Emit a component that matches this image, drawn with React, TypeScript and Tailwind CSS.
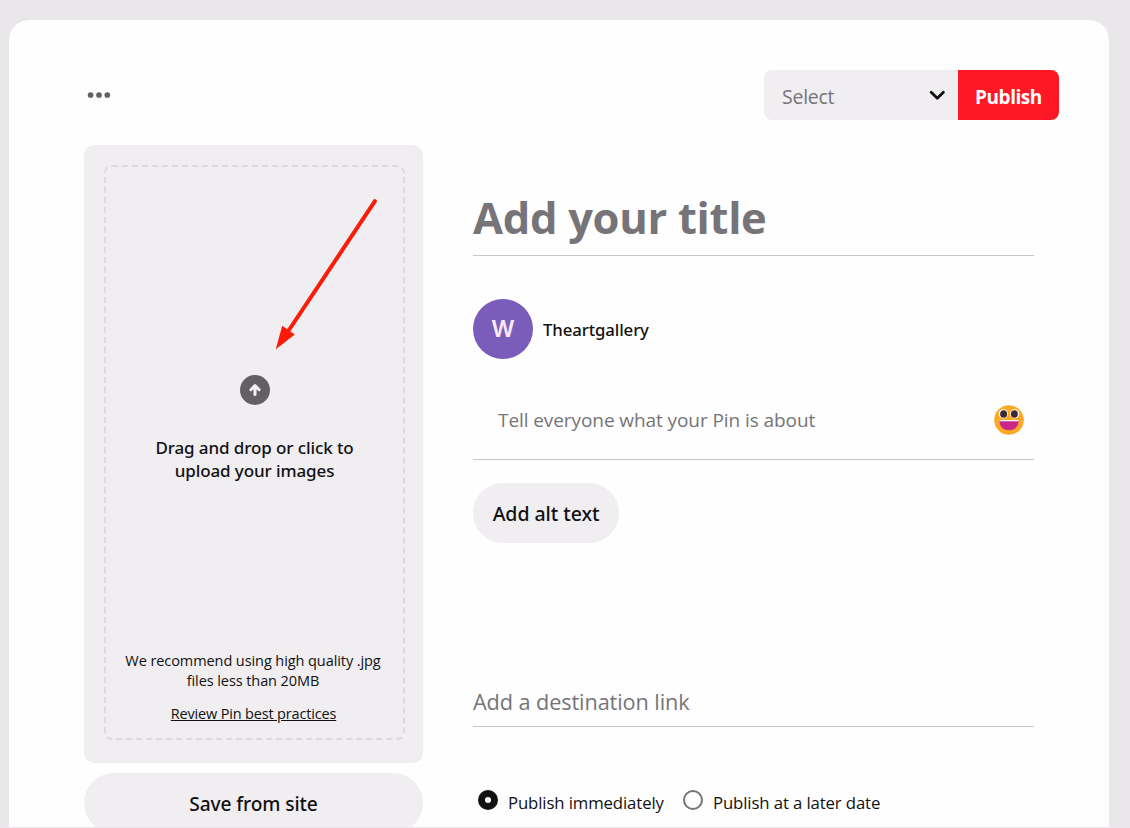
const REG = "font-['Open_Sans','Noto_Sans',sans-serif]";
const MED = "font-['Noto_Sans','Open_Sans',sans-serif] font-medium";

function MoreDots() {
  return (
    <svg width="24" height="8" viewBox="0 0 24 8" fill="#636163" aria-hidden="true">
      <circle cx="3.6" cy="4" r="2.85" />
      <circle cx="12" cy="4" r="2.85" />
      <circle cx="20.3" cy="4" r="2.85" />
    </svg>
  );
}

function UploadIcon() {
  return (
    <svg width="30" height="30" viewBox="0 0 30 30" aria-hidden="true">
      <circle cx="15" cy="15" r="15" fill="#636064" />
      <path
        d="M15 19.5V11.5M10.9 14.7L15 10.6L19.1 14.7"
        fill="none"
        stroke="#f3f1f4"
        strokeWidth="3"
        strokeLinecap="round"
        strokeLinejoin="round"
      />
    </svg>
  );
}

function PointerArrow() {
  return (
    <svg className="absolute left-[191px] top-[53px]" width="104" height="154" viewBox="0 0 104 154" aria-hidden="true">
      <path d="M99.9 3.2L14 132" stroke="#fd1a08" strokeWidth="4" strokeLinecap="round" />
      <path d="M0.8 151.2L7.2 127.8L19.8 136.4Z" fill="#fd1a08" />
    </svg>
  );
}

function Smiley() {
  return (
    <svg className="mb-px" width="30" height="30" viewBox="0 0 30 30" aria-hidden="true">
      <circle cx="15" cy="15" r="14.8" fill="#fba926" />
      <ellipse cx="9.3" cy="8.8" rx="4.6" ry="4.6" fill="#fff" />
      <ellipse cx="20.7" cy="8.8" rx="4.6" ry="4.6" fill="#fff" />
      <ellipse cx="9.6" cy="9" rx="3.5" ry="3.8" fill="#3b2a33" />
      <ellipse cx="20.4" cy="9" rx="3.5" ry="3.8" fill="#3b2a33" />
      <path d="M5.4 15.2H24.6C24.6 21.6 20.8 25.2 15 25.2S5.4 21.6 5.4 15.2Z" fill="#c9268a" />
      <path d="M5.4 15H24.6L24.5 16.3H5.5Z" fill="#fff" />
    </svg>
  );
}

function UploadPanel() {
  return (
    <div className="relative h-[618px] w-[339px] rounded-[10px] bg-[#f0eef1] pl-5 pr-[18px] pt-5">
      <div className="flex h-[575px] flex-col items-center rounded-lg border-2 border-dashed border-[#dcdadd] pt-[208px] text-center text-[#111]">
        <UploadIcon />
        <p className={`${MED} mt-[31px] text-[17px] leading-[23px] tracking-[-0.1px]`}>
          Drag and drop or click to
          <br />
          upload your images
        </p>
        <p className={`${REG} mr-[3px] mt-[169px] text-[14.5px] leading-5 tracking-[-0.08px]`}>
          We recommend using high quality .jpg
          <br />
          files less than 20MB
        </p>
        <a className={`${REG} mr-[2px] mt-[13px] text-[14.5px] leading-5 tracking-[-0.17px] underline`}>
          Review Pin best practices
        </a>
      </div>
      <PointerArrow />
    </div>
  );
}

function PinForm() {
  return (
    <div className="w-[561px] pt-[38px] text-[#111]">
      <div className="h-[73px] border-b border-[#c8c6c8]">
        <h1 className="font-['Open_Sans','Noto_Sans',sans-serif] text-[43.5px] font-bold leading-[70px] tracking-[-0.3px] text-[#767478]">
          Add your title
        </h1>
      </div>
      <div className="mt-[43px] flex items-center gap-[10px]">
        <div className="flex size-[60px] items-center justify-center rounded-full bg-[#7a5cbb] pt-px font-['Inter',sans-serif] text-[23px] font-semibold text-[#fbe7f8]">
          W
        </div>
        <span className={`${MED} pt-[2px] text-[16.75px] tracking-[-0.1px]`}>Theartgallery</span>
      </div>
      <div className="mt-[23px] flex h-[78px] items-center justify-between border-b border-[#c8c6c8] pl-[25px] pr-[10px]">
        <span className={`${REG} text-[19px] tracking-[-0.08px] text-[#767478]`}>Tell everyone what your Pin is about</span>
        <Smiley />
      </div>
      <button className={`${MED} mt-[23px] flex h-[60px] w-[146px] items-center justify-center rounded-full bg-[#f0eef1] pt-[2px] text-[19.5px] tracking-[-0.05px]`}>
        Add alt text
      </button>
      <div className="mt-[138px] h-[46px] border-b border-[#c8c6c8]">
        <span className={`${REG} block text-[21.7px] leading-[41px] tracking-[-0.1px] text-[#767478]`}>Add a destination link</span>
      </div>
      <div className={`${REG} mt-[60px] flex items-center pl-[5px] text-[16.75px] leading-[30px] tracking-[-0.12px]`}>
        <span className="mb-[5px] mr-[10px] flex size-5 items-center justify-center rounded-full bg-[#111]">
          <span className="size-[6px] rounded-full bg-white" />
        </span>
        <span className="w-[175px] pt-px">Publish immediately</span>
        <span className="mb-[5px] mr-[10px] size-5 rounded-full border-2 border-[#767478]" />
        <span className="pt-px">Publish at a later date</span>
      </div>
    </div>
  );
}

export default function App() {
  return (
    <div className="h-[828px] w-[1130px] overflow-hidden bg-[#e9e7ea] pl-[9px] pt-5">
      <main className="h-[807px] w-[1100px] overflow-hidden rounded-t-[20px] bg-[#fefefe] pl-[75px] pr-[50px] pt-[50px]">
        <header className="flex h-[50px] items-center justify-between pl-[3px]">
          <MoreDots />
          <div className="flex h-[50px] overflow-hidden rounded-[8px]">
            <div className="flex w-[194px] items-center justify-between bg-[#f0eef1] pl-[18px] pr-[12px]">
              <span className={`${REG} pt-[3px] text-[19.5px] tracking-[-0.25px] text-[#767478]`}>Select</span>
              <svg width="18" height="12" viewBox="0 0 18 12" aria-hidden="true">
                <path d="M3.2 3.2L9.3 9.2L15.4 3.2" fill="none" stroke="#111" strokeWidth="2.8" strokeLinecap="round" strokeLinejoin="round" />
              </svg>
            </div>
            <button className="flex w-[101px] items-center justify-center bg-[#fe1724] pt-[5px] font-['Open_Sans','Noto_Sans',sans-serif] text-[19px] font-bold tracking-[-0.45px] text-white">
              Publish
            </button>
          </div>
        </header>
        <div className="mt-[25px] flex gap-[50px]">
          <div className="flex flex-col gap-[10px]">
            <UploadPanel />
            <button className={`${MED} h-[60px] w-[339px] shrink-0 rounded-full bg-[#f0eef1] pt-[2px] text-[19.2px] tracking-[-0.1px] text-[#111]`}>
              Save from site
            </button>
          </div>
          <PinForm />
        </div>
      </main>
    </div>
  );
}
